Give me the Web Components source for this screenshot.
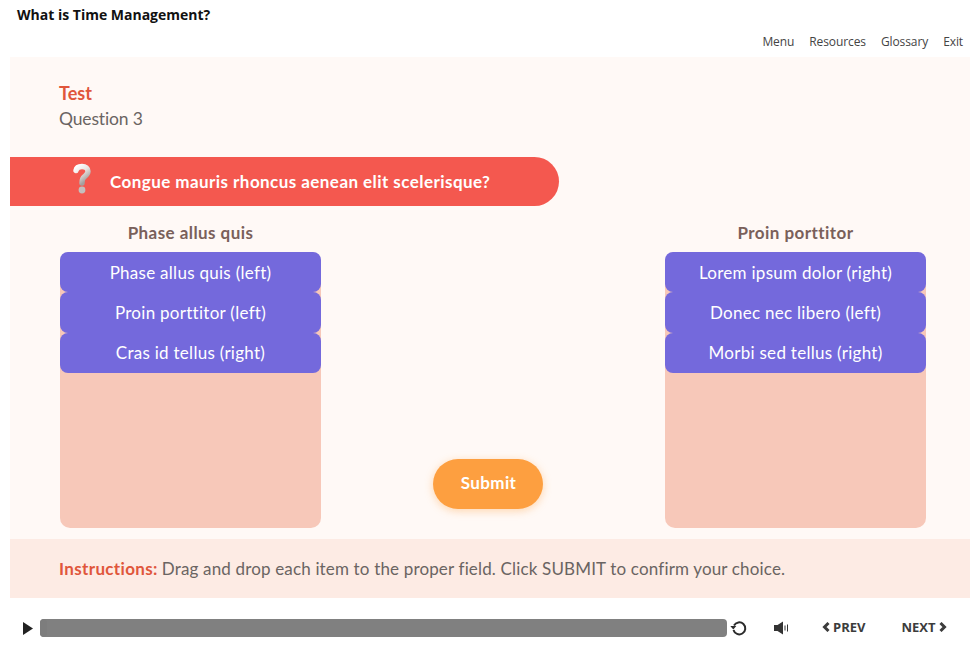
<!DOCTYPE html>
<html lang="en">
<head>
<meta charset="utf-8">
<title>What is Time Management?</title>
<style>
  html, body { margin: 0; padding: 0; background: #fff; }
  body { width: 980px; height: 658px; overflow: hidden; font-family: "Lato", "Open Sans", sans-serif; }
</style>
</head>
<body>
<course-player>
  <course-header slot="header" title-text="What is Time Management?"></course-header>
  <test-slide slot="slide">
    <question-banner>Congue mauris rhoncus aenean elit scelerisque?</question-banner>
    <match-column slot="left" heading="Phase allus quis">
      <match-tile>Phase allus quis (left)</match-tile>
      <match-tile>Proin porttitor (left)</match-tile>
      <match-tile>Cras id tellus (right)</match-tile>
    </match-column>
    <submit-button slot="middle">Submit</submit-button>
    <match-column slot="right" heading="Proin porttitor">
      <match-tile>Lorem ipsum dolor (right)</match-tile>
      <match-tile>Donec nec libero (left)</match-tile>
      <match-tile>Morbi sed tellus (right)</match-tile>
    </match-column>
  </test-slide>
  <instructions-bar slot="instructions"><b slot="label">Instructions:</b>Drag and drop each item to the proper field. Click SUBMIT to confirm your choice.</instructions-bar>
  <player-bar slot="controls"></player-bar>
</course-player>

<script>
// small helper, every element has the same constructor otherwise
function shadow(el, html) {
  el.attachShadow({ mode: "open" });
  el.shadowRoot.innerHTML = html;
}

class CoursePlayer extends HTMLElement {
  constructor() {
    super();
    shadow(this, `
<style>
  :host { display: flex; flex-direction: column; width: 980px; height: 658px; }
  .body { display: flex; flex-direction: column; padding: 0 10px; }
</style>
<slot name="header"></slot>
<div class="body">
  <slot name="slide"></slot>
  <slot name="instructions"></slot>
</div>
<slot name="controls"></slot>`);
  }
}

class CourseHeader extends HTMLElement {
  constructor() {
    super();
    shadow(this, `
<style>
  :host { display: block; height: 57px; font-family: "Open Sans", sans-serif; }
  h1 { margin: 0; padding: 5px 0 0 17px; font-size: 14px; line-height: 19px; font-weight: 700; color: #111; }
  nav { display: flex; justify-content: flex-end; gap: 15px; padding: 10px 17px 0 0; font-size: 12px; line-height: 16px; letter-spacing: -.1px; color: #444; }
</style>
<h1></h1>
<nav><span>Menu</span><span>Resources</span><span>Glossary</span><span>Exit</span></nav>`);
    this.shadowRoot.querySelector("h1").textContent = this.getAttribute("title-text");
  }
}

class TestSlide extends HTMLElement {
  constructor() {
    super();
    shadow(this, `
<style>
  :host { display: block; height: 482px; background: #fff9f6; font-family: "Lato", sans-serif; }
  .title { padding: 24px 0 0 49px; height: 76px; font-size: 18px; line-height: 25px; }
  .title b { display: block; color: #e0563b; }
  .title span { display: block; color: #6a6462; font-size: 17.5px; letter-spacing: -.15px; }
  .grid { display: grid; grid-template-columns: 261px 1fr 261px; padding: 17px 44px 11px 50px; height: 305px; }
  .mid { display: flex; justify-content: center; align-items: flex-end; padding: 0 0 19px 0; }
</style>
<div class="title"><b>Test</b><span>Question 3</span></div>
<slot></slot>
<div class="grid">
  <slot name="left"></slot>
  <div class="mid"><slot name="middle"></slot></div>
  <slot name="right"></slot>
</div>`);
  }
}

class QuestionBanner extends HTMLElement {
  constructor() {
    super();
    shadow(this, `
<style>
  :host { display: flex; align-items: center; width: 549px; height: 49px; box-sizing: border-box; padding-left: 59px; gap: 14px; background: #f4584f; border-radius: 0 25px 25px 0; color: #fff; font-family: "Lato", sans-serif; font-weight: 700; font-size: 17px; letter-spacing: .44px; }
  svg { width: 27px; height: 36px; flex: none; margin-top: -3px; }
</style>
<svg viewBox="0 0 27 36" aria-hidden="true">
  <defs>
    <linearGradient id="q" x1="0" y1="0" x2=".6" y2="1">
      <stop offset="0" stop-color="#fff"/><stop offset=".5" stop-color="#e8e3e1"/><stop offset="1" stop-color="#a5a09e"/>
    </linearGradient>
  </defs>
  <path d="M7 8.500C7.500 5.500 10 4.500 13 4.500c3.700 0 6 1.800 6 4.800 0 2.800-1.700 3.900-3.500 5.300-1.600 1.200-2.500 3-2.500 6.400" fill="none" stroke="url(#q)" stroke-width="5.400" stroke-linecap="round"/>
  <circle cx="13" cy="28" r="3.400" fill="#c4bfbd"/>
</svg>
<slot></slot>`);
  }
}

class MatchColumn extends HTMLElement {
  constructor() {
    super();
    shadow(this, `
<style>
  :host { display: flex; flex-direction: column; font-family: "Lato", sans-serif; }
  h2 { margin: 0; height: 29px; text-align: center; font-size: 17px; line-height: 20px; font-weight: 700; color: #7a605a; letter-spacing: .44px; }
  .zone { height: 276px; background: #f7c8b9; border-radius: 10px; }
</style>
<h2></h2>
<div class="zone"><slot></slot></div>`);
    this.shadowRoot.querySelector("h2").textContent = this.getAttribute("heading");
  }
}

class MatchTile extends HTMLElement {
  constructor() {
    super();
    shadow(this, `
<style>
  :host { display: flex; align-items: center; justify-content: center; height: 40.33px; background: #7469dc; border-radius: 8px; color: #fff; font-size: 17px; letter-spacing: .28px; }
</style>
<slot></slot>`);
  }
}

class SubmitButton extends HTMLElement {
  constructor() {
    super();
    shadow(this, `
<style>
  :host { display: flex; align-items: center; justify-content: center; width: 110px; height: 50px; box-sizing: border-box; padding: 0 0 3px 1px; margin-right: 10px; background: #fd9f40; border-radius: 25px; color: #fff; font-family: "Lato", sans-serif; font-weight: 700; font-size: 17px; letter-spacing: .4px; box-shadow: 0 2px 8px rgba(253, 159, 64, .4); }
</style>
<slot></slot>`);
  }
}

class InstructionsBar extends HTMLElement {
  constructor() {
    super();
    shadow(this, `
<style>
  :host { display: block; height: 59px; box-sizing: border-box; padding: 17px 0 0 49px; background: #fdebe4; color: #6a6462; font-family: "Lato", sans-serif; font-size: 17px; line-height: 25px; letter-spacing: .16px; }
  ::slotted(b) { color: #e0563b; font-weight: 700; margin-right: 4px; letter-spacing: .35px; }
</style>
<slot name="label"></slot><slot></slot>`);
  }
}

class PlayerBar extends HTMLElement {
  constructor() {
    super();
    shadow(this, `
<style>
  :host { display: flex; align-items: center; height: 60px; box-sizing: border-box; padding: 0 0 0 23px; font-family: "Open Sans", sans-serif; font-size: 13px; font-weight: 700; color: #3c3c3c; }
  svg { flex: none; display: block; }
  .track { width: 687px; height: 18px; margin-left: 7px; background: #808080; border-radius: 4px; overflow: hidden; }
  .track div { width: 7px; height: 100%; background: #7d7d7d; border-radius: 0 4px 4px 0; }
  .replay { margin-left: 3px; }
  .volume { margin-left: 26px; }
  .btn { display: flex; align-items: center; gap: 3px; margin-top: -2px; }
  .prev { margin-left: 33px; }
  .next { margin-left: 36px; }
</style>
<svg width="10" height="13" viewBox="0 0 10 13"><path d="M0 0L10 6.500L0 13Z" fill="#222"/></svg>
<div class="track"><div></div></div>
<svg class="replay" width="18" height="18" viewBox="0 0 18 18" fill="none" stroke="#2b2b2b" stroke-width="2"><path d="M4 6.500A6 6 0 1 1 3.500 11"/><path d="M.5 8.500L6.500 8.500L3.500 12Z" fill="#2b2b2b" stroke="none" transform="translate(-.2 -1.500)"/></svg>
<svg class="volume" width="15" height="14" viewBox="0 0 15 14" fill="#333"><path d="M0 4H3.500L9 .5V13.500L3.500 10H0Z"/><rect x="10.500" y="4.500" width="1" height="5"/><rect x="13" y="3.500" width="1" height="7"/></svg>
<div class="btn prev"><svg width="8" height="10" viewBox="0 0 8 10" fill="none" stroke="#3c3c3c" stroke-width="3"><path d="M6.500 1L2.500 5L6.500 9"/></svg><span>PREV</span></div>
<div class="btn next"><span>NEXT</span><svg width="8" height="10" viewBox="0 0 8 10" fill="none" stroke="#3c3c3c" stroke-width="3"><path d="M1.500 1L5.500 5L1.500 9"/></svg></div>`);
  }
}

customElements.define("course-player", CoursePlayer);
customElements.define("course-header", CourseHeader);
customElements.define("test-slide", TestSlide);
customElements.define("question-banner", QuestionBanner);
customElements.define("match-column", MatchColumn);
customElements.define("match-tile", MatchTile);
customElements.define("submit-button", SubmitButton);
customElements.define("instructions-bar", InstructionsBar);
customElements.define("player-bar", PlayerBar);
</script>
</body>
</html>
